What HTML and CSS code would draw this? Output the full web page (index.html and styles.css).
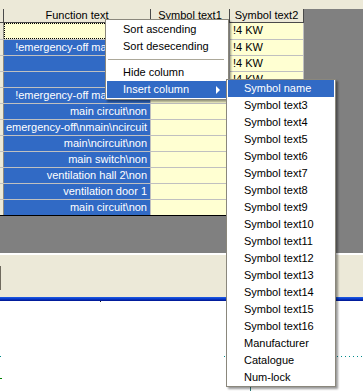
FILE: index.html
```html
<!DOCTYPE html>
<html lang="en">
<head>
    <meta charset="UTF-8">
    <title>Function list</title>
    <link rel="stylesheet" href="styles.css">
</head>
<body>
<div class="screen">
    <div class="topbar"></div>

    <div class="workspace">
        <div class="grid">
            <div class="row head">
                <div class="cell stub"></div>
                <div class="cell c-func">Function text</div>
                <div class="cell c-sym1">Symbol text1</div>
                <div class="cell c-sym2">Symbol text2</div>
            </div>
            <div class="row">
                <div class="cell stub"></div>
                <div class="cell c-func focus"></div>
                <div class="cell c-sym1"></div>
                <div class="cell c-sym2">!4 KW</div>
            </div>
            <div class="row">
                <div class="cell stub"></div>
                <div class="cell c-func sel"><span>!emergency-off main circuit</span></div>
                <div class="cell c-sym1"></div>
                <div class="cell c-sym2">!4 KW</div>
            </div>
            <div class="row">
                <div class="cell stub"></div>
                <div class="cell c-func sel"></div>
                <div class="cell c-sym1"></div>
                <div class="cell c-sym2">!4 KW</div>
            </div>
            <div class="row">
                <div class="cell stub"></div>
                <div class="cell c-func sel"></div>
                <div class="cell c-sym1"></div>
                <div class="cell c-sym2">!4 KW</div>
            </div>
            <div class="row">
                <div class="cell stub"></div>
                <div class="cell c-func sel"><span>!emergency-off main circuit</span></div>
                <div class="cell c-sym1"></div>
                <div class="cell c-sym2"></div>
            </div>
            <div class="row">
                <div class="cell stub"></div>
                <div class="cell c-func sel"><span>main circuit\non</span></div>
                <div class="cell c-sym1"></div>
                <div class="cell c-sym2"></div>
            </div>
            <div class="row">
                <div class="cell stub"></div>
                <div class="cell c-func sel"><span>emergency-off\nmain\ncircuit</span></div>
                <div class="cell c-sym1"></div>
                <div class="cell c-sym2"></div>
            </div>
            <div class="row">
                <div class="cell stub"></div>
                <div class="cell c-func sel"><span>main\ncircuit\non</span></div>
                <div class="cell c-sym1"></div>
                <div class="cell c-sym2"></div>
            </div>
            <div class="row">
                <div class="cell stub"></div>
                <div class="cell c-func sel"><span>main switch\non</span></div>
                <div class="cell c-sym1"></div>
                <div class="cell c-sym2"></div>
            </div>
            <div class="row">
                <div class="cell stub"></div>
                <div class="cell c-func sel"><span>ventilation hall 2\non</span></div>
                <div class="cell c-sym1"></div>
                <div class="cell c-sym2"></div>
            </div>
            <div class="row">
                <div class="cell stub"></div>
                <div class="cell c-func sel"><span>ventilation door 1</span></div>
                <div class="cell c-sym1"></div>
                <div class="cell c-sym2"></div>
            </div>
            <div class="row">
                <div class="cell stub"></div>
                <div class="cell c-func sel"><span>main circuit\non</span></div>
                <div class="cell c-sym1"></div>
                <div class="cell c-sym2"></div>
            </div>
        </div>
    </div>

    <div class="edge-line"></div>
    <div class="toolbar"><span class="grip"></span></div>
    <div class="title-line"></div>

    <div class="canvas">
        <span class="mark tick"></span>
        <span class="mark dot-left"></span>
        <span class="mark dot-mid"></span>
        <span class="mark dotted"></span>
        <span class="mark green"></span>
        <span class="mark stem"></span>
    </div>

    <!-- context menu -->
    <ul class="menu ctx-menu">
        <li class="item">Sort ascending</li>
        <li class="item">Sort desecending</li>
        <li class="divider"></li>
        <li class="item">Hide column</li>
        <li class="item active has-sub">Insert column</li>
    </ul>

    <ul class="menu sub-menu">
        <li class="item active">Symbol name</li>
        <li class="item">Symbol text3</li>
        <li class="item">Symbol text4</li>
        <li class="item">Symbol text5</li>
        <li class="item">Symbol text6</li>
        <li class="item">Symbol text7</li>
        <li class="item">Symbol text8</li>
        <li class="item">Symbol text9</li>
        <li class="item">Symbol text10</li>
        <li class="item">Symbol text11</li>
        <li class="item">Symbol text12</li>
        <li class="item">Symbol text13</li>
        <li class="item">Symbol text14</li>
        <li class="item">Symbol text15</li>
        <li class="item">Symbol text16</li>
        <li class="item">Manufacturer</li>
        <li class="item">Catalogue</li>
        <li class="item">Num-lock</li>
    </ul>
</div>
</body>
</html>
```

FILE: styles.css
```css
/* General */
* {
    box-sizing: border-box;
}

body {
    margin: 0;
    font-family: 'Liberation Sans', Arial, sans-serif;
    font-size: 11px;
    color: #000;
    background: #fff;
}

.screen {
    position: relative;
    width: 363px;
    height: 391px;
    overflow: hidden;
}

.topbar {
    height: 9px;
    background: #ece9d8;
}

/* Workspace with the grid */
.workspace {
    height: 244px;
    background: #808080;
}

.grid {
    width: 304px;
    border-bottom: 1px solid #000;
}

.row {
    display: flex;
    height: 16px;
}

.row + .row {
    border-top: 1px solid #c0c0c0;
}

.head + .row {
    border-top: none;
}

.cell {
    height: 100%;
    line-height: 15px;
    white-space: nowrap;
    overflow: hidden;
    border-right: 1px solid #c0c0c0;
    background: #ffffd2;
}

.stub {
    width: 4px;
    background: #ece9d8;
    border-right-color: #8c8a80;
}

.c-func {
    width: 147px;
}

.c-sym1 {
    width: 79px;
}

.c-sym2 {
    width: 74px;
    padding-left: 3px;
}

/* Header */
.head {
    height: 14px;
    border-bottom: 1px solid #4a4a4a;
}

.head .cell {
    background: #ece9d8;
    line-height: 13px;
    text-align: center;
    padding: 0;
    border-right-color: #4a4a4a;
}

/* Selected function cells */
.sel {
    display: flex;
    justify-content: flex-end;
    padding-right: 3px;
    background: #316ac5;
    color: #fff;
}

.focus {
    outline: 1px dotted #000;
    outline-offset: -1px;
}

/* Lower part */
.edge-line {
    height: 2px;
    background: #fff;
}

.toolbar {
    height: 42px;
    background: #ece9d8;
    padding-top: 11px;
}

.grip {
    display: block;
    width: 1px;
    height: 24px;
    background: #6f6a5e;
}

.title-line {
    height: 4px;
    background: linear-gradient(#1f5fe6, #0838c8 50%, #00148c);
}

.canvas {
    position: relative;
    height: 90px;
    background: #fff;
}

.mark {
    position: absolute;
    display: block;
}

.tick {
    left: 100px;
    top: 0;
    width: 1px;
    height: 1px;
    background: #222;
}

.dot-left {
    left: 0;
    top: 55px;
    width: 1px;
    height: 1px;
    background: #008b8b;
}

.dot-mid {
    left: 224px;
    top: 55px;
    width: 1px;
    height: 1px;
    background: #008b8b;
}

.dotted {
    left: 337px;
    top: 55px;
    width: 26px;
    height: 1px;
    background: repeating-linear-gradient(90deg, #008b8b 0 1px, transparent 1px 4px);
}

.green {
    left: 0;
    top: 77px;
    width: 2px;
    height: 1px;
    background: #008000;
}

.stem {
    left: 250px;
    top: 86px;
    width: 1px;
    height: 5px;
    background: #2f7f7f;
}

/* Menus */
.menu {
    position: absolute;
    margin: 0;
    padding: 1px;
    list-style: none;
    background: #fff;
    border: 1px solid #8a877c;
    box-shadow: 2px 2px 2px rgba(0, 0, 0, 0.4);
}

.ctx-menu {
    left: 105px;
    top: 19px;
    width: 124px;
}

.sub-menu {
    left: 226px;
    top: 79px;
    width: 110px;
    padding: 0 1px;
}

.item {
    position: relative;
    height: 17px;
    line-height: 17px;
    padding-left: 16px;
    white-space: nowrap;
}

.item.active {
    background: #316ac5;
    color: #fff;
}

.has-sub::after {
    content: "";
    position: absolute;
    right: 7px;
    top: 5px;
    border-left: 4px solid #fff;
    border-top: 4px solid transparent;
    border-bottom: 4px solid transparent;
}

.divider {
    height: 9px;
    padding-top: 4px;
}

.divider::before {
    content: "";
    display: block;
    margin: 0 3px 0 1px;
    border-top: 1px solid #aca899;
}
```
